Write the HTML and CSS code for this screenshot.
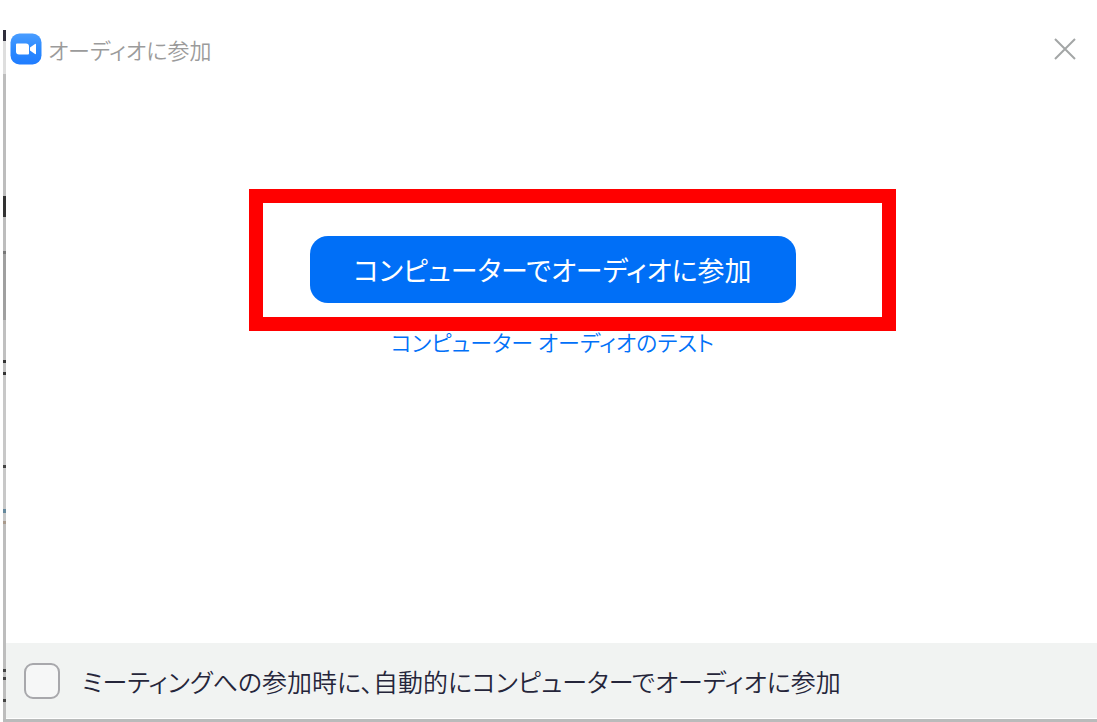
FILE: index.html
```
<!DOCTYPE html>
<html lang="ja">
<head>
    <meta charset="UTF-8">
    <meta name="viewport" content="width=device-width, initial-scale=1.0">
    <title>オーディオに参加</title>
    <link rel="stylesheet" href="styles.css">
</head>
<body>

<div class="window">
    <header class="title-bar">
        <svg class="logo" viewBox="0 0 32 32" aria-hidden="true">
            <defs>
                <linearGradient id="logoFill" x1="0" y1="0" x2="0" y2="1">
                    <stop offset="0" stop-color="#4a9dff"/>
                    <stop offset="0.5" stop-color="#2b8aff"/>
                    <stop offset="1" stop-color="#1f7cff"/>
                </linearGradient>
            </defs>
            <rect x="0.5" y="0.5" width="31" height="31" rx="9" fill="url(#logoFill)"/>
            <path d="M6 11.5Q6 10.5 7 10.5H16Q19 10.5 19 13.5V20.5Q19 21.5 18 21.5H9Q6 21.5 6 18.5Z" fill="#fff"/>
            <path d="M20 14.5L25 11Q26 10.5 26 11.5V20.5Q26 21.5 25 21L20 17.5Z" fill="#fff"/>
        </svg>
        <h1>オーディオに参加</h1>
        <button type="button" class="close-btn" aria-label="閉じる">
            <svg viewBox="0 0 24 24" aria-hidden="true">
                <path d="M2 2L22 22M22 2L2 22" fill="none" stroke="#a3a6a6" stroke-width="2"/>
            </svg>
        </button>
    </header>

    <main class="content">
        <div class="join">
            <button type="button" class="join-btn">コンピューターでオーディオに参加</button>
            <div class="highlight"></div>
        </div>
        <a class="test-link" href="#">コンピューター オーディオのテスト</a>
    </main>

    <footer class="options">
        <input type="checkbox" id="autoJoin">
        <label for="autoJoin">ミーティングへの参加時に、自動的にコンピューターでオーディオに参加</label>
    </footer>
</div>

</body>
</html>
```
FILE: styles.css
```
* {
    box-sizing: border-box;
}
body {
    margin: 0;
    padding: 30px 0 0 3px;
    background-color: #ffffff;
    color: #25253a;
    font-family: "Noto Sans CJK JP", sans-serif;
    font-feature-settings: "palt";
}
.window {
    display: flex;
    flex-direction: column;
    min-height: calc(100vh - 30px);
    padding-left: 3px;
    border-bottom: 3px solid #b9bbbb;
    /* Window edge, with what lies behind it showing through */
    background: linear-gradient(
        #302f3c 0 11px, #dedede 11px 44px, #bdbdbd 44px 166px,
        #333333 166px 187px, #bdbdbd 187px 221px, #777777 221px 224px,
        #a0a0a0 224px 290px, #c0c0c0 290px 330px, #333333 330px 333px,
        #c0c0c0 333px 342px, #333333 342px 345px, #c8c8c8 345px 435px,
        #444444 435px 438px, #c8c8c8 438px 479px, #66899d 479px 483px,
        #c8c8c8 483px 491px, #a99a8c 491px 494px, #bdbdbd 494px 639px,
        #444444 639px 642px, #bdbdbd 642px 647px, #444444 647px 650px,
        #bdbdbd 650px 669px, #444444 669px 672px, #bdbdbd 672px
    ) left top / 3px 100% no-repeat;
}
.title-bar {
    display: flex;
    align-items: center;
    height: 38px;
    padding: 0 20px 0 4px;
}
.logo {
    width: 32px;
    height: 32px;
    margin-right: 6px;
}
.title-bar h1 {
    flex: 1;
    margin: 0;
    color: #9b9b9b;
    font-size: 22px;
    font-weight: 350;
    line-height: 32px;
}
.close-btn {
    width: 24px;
    height: 24px;
    padding: 0;
    border: none;
    background: none;
    cursor: pointer;
}
.close-btn svg {
    display: block;
}
.content {
    flex: 1;
    display: flex;
    flex-direction: column;
    align-items: center;
    padding: 168px 0 20px 2px;
}
.join {
    position: relative;
}
.join-btn {
    display: block;
    width: 486px;
    height: 67px;
    padding: 0;
    border: none;
    border-radius: 18px;
    background-color: #006ff7;
    color: #ffffff;
    font: inherit;
    font-feature-settings: inherit;
    font-size: 27px;
    cursor: pointer;
}
/* Red frame drawn over the button to point it out */
.highlight {
    position: absolute;
    top: -47px;
    right: -100px;
    bottom: -28px;
    left: -61px;
    border: 14px solid #ff0000;
    pointer-events: none;
}
.test-link {
    margin-top: 22px;
    color: #0070f8;
    font-size: 22px;
    font-weight: 350;
    line-height: 32px;
    text-decoration: none;
}
.options {
    display: flex;
    align-items: center;
    gap: 22px;
    height: 76px;
    padding: 0 18px;
    background-color: #f1f3f2;
    border-bottom: 1px solid #ffffff;
}
.options input {
    appearance: none;
    width: 36px;
    height: 36px;
    margin: 0;
    border: 2px solid #a8a8ac;
    border-radius: 9px;
    background-color: #f6f7f7;
}
.options input:checked {
    background-color: #006ff7;
}
.options label {
    font-size: 25px;
    font-weight: 350;
    line-height: 32px;
}
```
